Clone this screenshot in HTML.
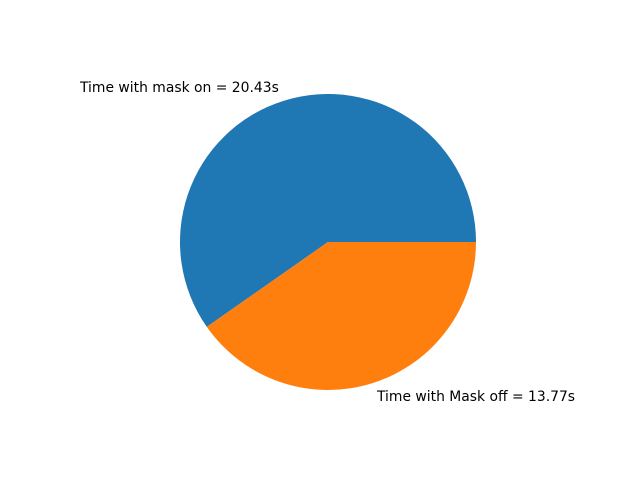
<!DOCTYPE html>
<html><head><meta charset="utf-8"><style>
html,body{margin:0;padding:0;background:#fff;width:640px;height:480px;overflow:hidden}
svg{display:block}
text{font-family:"DejaVu Sans","Liberation Sans",sans-serif;font-size:13.9px;fill:#000}
</style></head><body>
<svg width="640" height="480" viewBox="0 0 640 480">
<path d="M328 242 L476 242 A148 148 0 1 0 206.8 326.9 Z" fill="#1f77b4"/>
<path d="M328 242 L206.8 326.9 A148 148 0 0 0 476 242 Z" fill="#ff7f0e"/>
<text x="80" y="92">Time with mask on = 20.43s</text>
<text x="377" y="401">Time with Mask off = 13.77s</text>
</svg>
</body></html>
